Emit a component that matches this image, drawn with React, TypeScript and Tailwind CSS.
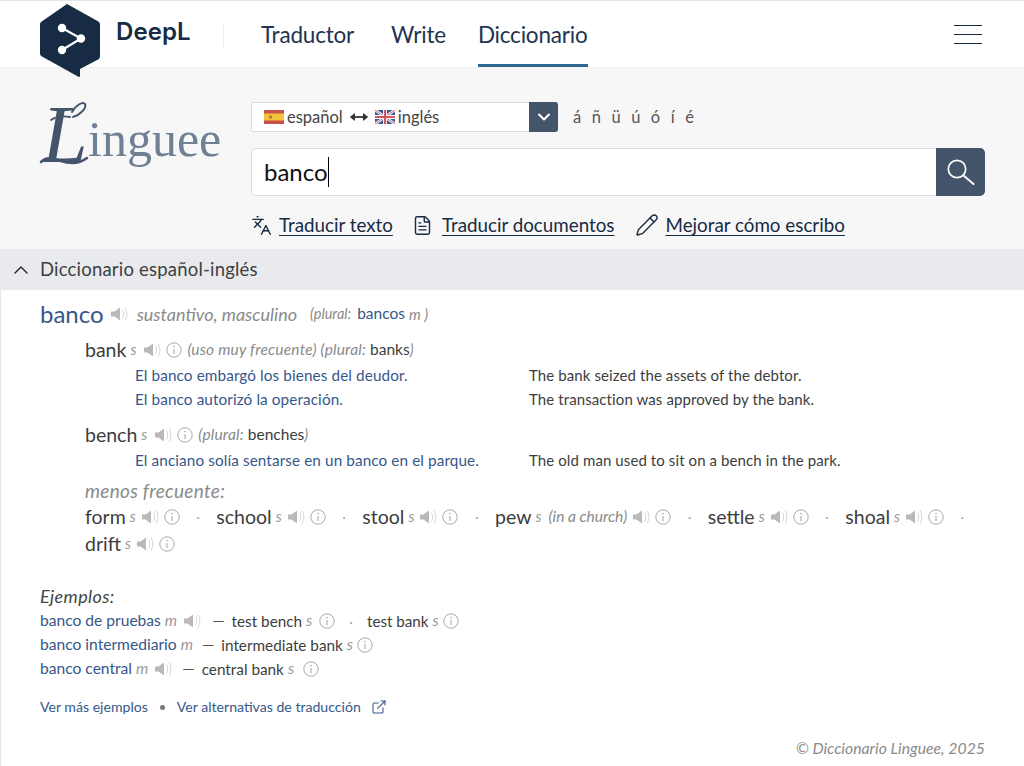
import { ChevronDown, ChevronUp, Languages, FileText, Pencil, ExternalLink } from 'lucide-react';

const sans = "font-['Lato','Noto_Sans',sans-serif]";

function Speaker({ className = '' }: { className?: string }) {
  return (
    <svg viewBox="0 0 20 18" className={`inline-block w-[20px] h-[18px] shrink-0 ${className}`}>
      <path d="M1 6.5h3.5L10 2.5v13l-5.5-4H1z" fill="#b9b9b9" />
      <path d="M12.5 4.5c1.6 2.8 1.6 6.2 0 9M15 2.5c2.4 4 2.4 9 0 13" fill="none" stroke="#d0d0d0" strokeWidth="0.9" />
    </svg>
  );
}

function InfoIcon({ className = '' }: { className?: string }) {
  return (
    <svg viewBox="0 0 16 16" className={`inline-block w-[16px] h-[16px] shrink-0 ${className}`}>
      <circle cx="8" cy="8" r="7.2" fill="none" stroke="#a9a9a9" strokeWidth="1" />
      <path d="M8 7v5" stroke="#a9a9a9" strokeWidth="1.1" />
      <circle cx="8" cy="4.6" r="0.8" fill="#a9a9a9" />
    </svg>
  );
}

function SearchGlyph() {
  return (
    <svg viewBox="0 0 28 26" className="w-[28px] h-[26px]">
      <circle cx="10" cy="10" r="8.7" fill="none" stroke="#fff" strokeWidth="1.7" />
      <path d="M16.5 16.5 26.500 25" stroke="#fff" strokeWidth="2" strokeLinecap="round" />
    </svg>
  );
}

function SpainFlag() {
  return (
    <svg viewBox="0 0 20 14" className="w-[20px] h-[14px] shrink-0">
      <rect width="20" height="14" fill="#c8514a" />
      <rect y="3.5" width="20" height="7" fill="#f3c33c" />
      <rect x="5" y="5.5" width="3" height="3" fill="#b9763f" />
    </svg>
  );
}

function UkFlag() {
  return (
    <svg viewBox="0 0 20 14" className="w-[20px] h-[14px] shrink-0">
      <rect width="20" height="14" fill="#3b5a9a" />
      <path d="M0 0l20 14M20 0L0 14" stroke="#fff" strokeWidth="2.6" />
      <path d="M0 0l20 14M20 0L0 14" stroke="#d0555f" strokeWidth="0.9" />
      <path d="M10 0v14M0 7h20" stroke="#fff" strokeWidth="4" />
      <path d="M10 0v14M0 7h20" stroke="#d0555f" strokeWidth="2.2" />
    </svg>
  );
}

function SwapArrow() {
  return (
    <svg viewBox="0 0 20 10" className="w-[20px] h-[10px] shrink-0 mx-[6px]">
      <path d="M4 5h12" stroke="#333" strokeWidth="1.8" />
      <path d="M6 1 0.8 5 6 9zM14 1l5.2 4L14 9z" fill="#333" />
    </svg>
  );
}

function DeepLMark() {
  return (
    <svg viewBox="0 0 60 74" className="w-[60px] h-[74px] shrink-0">
      <path d="M27 1 57.5 18c1.6.9 2.5 2 2.5 3.6v31.6c0 1.6-.8 2.8-2.4 3.6L40 66v7c0 1-.8 1.2-1.6.8L2.4 53.8C.8 52.9 0 51.8 0 50.2V21.6C0 20 .8 18.9 2.4 18L27 1c1-.6-1-.6 0 0z" fill="#172b45" />
      <path d="M22 25l19 10.5L22 47" fill="none" stroke="#fff" strokeWidth="2.2" />
      <circle cx="22" cy="25" r="4.2" fill="#fff" />
      <circle cx="41" cy="35.5" r="4.2" fill="#fff" />
      <circle cx="22" cy="47" r="4.2" fill="#fff" />
    </svg>
  );
}

function LingueeLogo() {
  return (
    <div className="relative w-[180px] h-[72px] shrink-0 font-['Liberation_Serif',serif]">
      <span className="absolute left-[2px] top-[-6px] text-[82px] leading-[82px] italic text-[#44546a]">L</span>
      <svg viewBox="0 0 180 72" className="absolute inset-0 w-[180px] h-[72px] overflow-visible">
        <path d="M1 62c5-6 13-4 20-1 9 3 18 3 26-3" fill="none" stroke="#44546a" strokeWidth="2.6" strokeLinecap="round" />
        <path d="M11 20c6-4 13-4 19-3" fill="none" stroke="#44546a" strokeWidth="1.8" strokeLinecap="round" />
        <path d="M32 12c4-7 11-11 13-8 2 4-5 11-12 13" fill="none" stroke="#44546a" strokeWidth="2" strokeLinecap="round" />
      </svg>
      <span className="absolute left-[48px] top-[14px] text-[50px] leading-[50px] text-[#6f8095]">inguee</span>
    </div>
  );
}

function ToolLink({ icon, label, gap }: { icon: React.ReactNode; label: string; gap: string }) {
  return (
    <a className={`flex items-center ${gap} text-[#172b45]`}>
      {icon}
      <span className="text-[18.8px] leading-[24px] underline underline-offset-[3px] decoration-1">{label}</span>
    </a>
  );
}

function Example({ es, en }: { es: string; en: string }) {
  return (
    <div className="flex h-[24px] items-center">
      <span className="w-[444px] pl-[50px] shrink-0 text-[15.3px] tracking-[0.1px] text-[#36578a]">{es}</span>
      <span className="text-[15px] tracking-[0.1px] text-[#3d3d3d]">{en}</span>
    </div>
  );
}

const lessFrequent: { word: string; note?: string }[] = [
  { word: 'form' },
  { word: 'school' },
  { word: 'stool' },
  { word: 'pew', note: '(in a church)' },
  { word: 'settle' },
  { word: 'shoal' },
];

function Dot({ className = 'mx-[16.5px]' }: { className?: string }) {
  return <span className={`${className} text-[#aaa] text-[14px]`}>·</span>;
}

export default function App() {
  return (
    <div className={`w-[1024px] h-[766px] overflow-hidden bg-white ${sans}`}>
      <header className="relative z-10 h-[68px] border-t border-[#dfe6e6] bg-white border-b-[#f0f0f0] border-b flex items-start pl-[40px]">
        <div className="mt-[2px]"><DeepLMark /></div>
        <span className="ml-[16px] mt-[16px] text-[24px] leading-[30px] font-semibold text-[#172b45] font-['Inter',sans-serif] tracking-[0.1px] w-[74px] whitespace-nowrap">DeepL</span>
        <span className="ml-[33px] mt-[22px] w-[1px] h-[24px] bg-[#eeeeee]" />
        <nav className="ml-[37px] flex text-[22.5px] text-[#22344f] h-[66px]">
          <a className="pt-[18px] leading-[32px] -tracking-[0.2px]">Traductor</a>
          <a className="ml-[37px] pt-[18px] leading-[32px] -tracking-[0.2px]">Write</a>
          <a className="ml-[32px] pt-[18px] leading-[32px] -tracking-[0.2px] border-b-[3px] border-[#2f6793]">Diccionario</a>
        </nav>
        <button className="ml-auto mr-[42px] mt-[24px] w-[28px] flex flex-col gap-[8px]">
          <span className="block h-[1px] bg-[#172b45]" />
          <span className="block h-[1px] bg-[#172b45]" />
          <span className="block h-[1px] bg-[#172b45]" />
        </button>
      </header>

      <section className="h-[181px] bg-[#f7f7f7] flex pl-[40px] pr-[39px]">
        <div className="mt-[32px]"><LingueeLogo /></div>
        <div className="ml-[31px] flex-1 pt-[34px]">
          <div className="flex items-center">
            <div className="w-[307px] h-[30px] flex bg-white border border-[#dddddd] rounded-[2px]">
              <div className="flex-1 flex items-center pl-[12px] text-[16.5px] text-[#444]">
                <SpainFlag />
                <span className="ml-[3px]">español</span>
                <SwapArrow />
                <UkFlag />
                <span className="ml-[3px]">inglés</span>
              </div>
              <div className="w-[29px] -my-[1px] -mr-[1px] bg-[#44546a] rounded-r-[3px] flex items-center justify-center">
                <ChevronDown size={20} strokeWidth={2.5} className="text-white" />
              </div>
            </div>
            <div className="ml-[15px] flex gap-[10.5px] text-[16.5px] text-[#555]">
              {['á', 'ñ', 'ü', 'ú', 'ó', 'í', 'é'].map(c => <span key={c}>{c}</span>)}
            </div>
          </div>
          <div className="mt-[16px] h-[48px] flex">
            <div className="flex-1 bg-white border border-[#dddddd] border-r-0 rounded-l-[5px] flex items-center pl-[12px] text-[24px] text-[#111]">
              banco<span className="w-[1px] h-[30px] bg-black" />
            </div>
            <div className="w-[49px] bg-[#44546a] rounded-r-[5px] flex items-center justify-center">
              <SearchGlyph />
            </div>
          </div>
          <div className="mt-[17px] flex items-center">
            <ToolLink gap="gap-[7px]" label="Traducir texto" icon={<Languages size={21} strokeWidth={1.6} />} />
            <div className="ml-[19px]">
              <ToolLink gap="gap-[9px]" label="Traducir documentos" icon={<FileText size={21} strokeWidth={1.6} />} />
            </div>
            <div className="ml-[21px]">
              <ToolLink gap="gap-[6px]" label="Mejorar cómo escribo" icon={<Pencil size={24} strokeWidth={1.4} />} />
            </div>
          </div>
        </div>
      </section>

      <main className="border-l border-[#e5e5e5] h-[517px]">
        <div className="h-[41px] bg-[#e8eaee] -ml-[1px] flex items-center pl-[9px] text-[18.5px] tracking-[0.2px] text-[#3f3f3f]">
          <ChevronUp size={24} strokeWidth={1.4} className="text-[#222]" />
          <span className="ml-[7px]">Diccionario español-inglés</span>
        </div>

        <div className="pl-[39px] pr-[39px]">
          <div className="mt-[9px] h-[30px] flex items-center">
            <span className="text-[24px] text-[#36578a]">banco</span>
            <Speaker className="ml-[6px]" />
            <span className="ml-[7px] text-[18px] italic text-[#8a8a8a]">sustantivo, masculino</span>
            <span className="ml-[13px] text-[14.5px] italic text-[#8a8a8a]">(plural:</span>
            <span className="ml-[6px] text-[15.5px] text-[#36578a]">bancos</span>
            <span className="ml-[4px] text-[15px] italic text-[#8a8a8a]">m )</span>
          </div>

          <div className="ml-[45px] mt-[7px]">
            <div className="h-[27px] flex items-center">
              <span className="text-[19.5px] text-[#3d3d3d]">bank</span>
              <span className="ml-[4px] text-[15px] italic text-[#999]">s</span>
              <Speaker className="ml-[7px]" />
              <InfoIcon className="ml-[3px]" />
              <span className="ml-[5px] text-[15.5px] tracking-[0.2px] italic text-[#8a8a8a]">(uso muy frecuente) (plural:</span>
              <span className="ml-[4px] text-[15.5px] text-[#3d3d3d]">banks</span>
              <span className="text-[15px] italic text-[#8a8a8a]">)</span>
            </div>
            <Example es="El banco embargó los bienes del deudor." en="The bank seized the assets of the debtor." />
            <Example es="El banco autorizó la operación." en="The transaction was approved by the bank." />
            <div className="mt-[10px] h-[27px] flex items-center">
              <span className="text-[19.5px] text-[#3d3d3d]">bench</span>
              <span className="ml-[4px] text-[15px] italic text-[#999]">s</span>
              <Speaker className="ml-[7px]" />
              <InfoIcon className="ml-[3px]" />
              <span className="ml-[5px] text-[15.5px] tracking-[0.2px] italic text-[#8a8a8a]">(plural:</span>
              <span className="ml-[4px] text-[15.5px] text-[#3d3d3d]">benches</span>
              <span className="text-[15px] italic text-[#8a8a8a]">)</span>
            </div>
            <Example es="El anciano solía sentarse en un banco en el parque." en="The old man used to sit on a bench in the park." />

            <div className="mt-[6px] h-[25px] leading-[25px] text-[19px] tracking-[0.3px] italic text-[#8a8a8a]">menos frecuente:</div>
            <div className="h-[27px] flex items-center whitespace-nowrap">
              {lessFrequent.map(item => (
                <span key={item.word} className="flex items-center">
                  <span className="text-[19.5px] text-[#3d3d3d]">{item.word}</span>
                  <span className="ml-[4px] text-[15px] italic text-[#999]">s</span>
                  {item.note && <span className="ml-[7px] text-[15.5px] italic text-[#8a8a8a]">{item.note}</span>}
                  <Speaker className="ml-[5px]" />
                  <InfoIcon className="ml-[3px]" />
                  <Dot />
                </span>
              ))}
            </div>
            <div className="h-[27px] flex items-center">
              <span className="text-[19.5px] text-[#3d3d3d]">drift</span>
              <span className="ml-[4px] text-[15px] italic text-[#999]">s</span>
              <Speaker className="ml-[5px]" />
              <InfoIcon className="ml-[3px]" />
            </div>
          </div>

          <div className="mt-[27px] h-[24px] leading-[24px] text-[18px] tracking-[0.4px] italic text-[#444]">Ejemplos:</div>
          <div className="mt-[1px] text-[15.6px]">
            <div className="h-[24px] flex items-center">
              <span className="text-[#36578a]">banco de pruebas</span>
              <span className="ml-[4px] italic text-[#999]">m</span>
              <Speaker className="ml-[6px]" />
              <span className="ml-[9px] text-[#555]">—</span>
              <span className="ml-[7px] text-[15.3px] text-[#3d3d3d]">test bench</span>
              <span className="ml-[4px] italic text-[#999]">s</span>
              <InfoIcon className="ml-[7px]" />
              <Dot className="mx-[14px]" />
              <span className="text-[15.2px] text-[#3d3d3d]">test bank</span>
              <span className="ml-[4px] italic text-[#999]">s</span>
              <InfoIcon className="ml-[4px]" />
            </div>
            <div className="h-[24px] flex items-center">
              <span className="text-[#36578a]">banco intermediario</span>
              <span className="ml-[4px] italic text-[#999]">m</span>
              <span className="ml-[9px] text-[#555]">—</span>
              <span className="ml-[7px] text-[15.3px] text-[#3d3d3d]">intermediate bank</span>
              <span className="ml-[4px] italic text-[#999]">s</span>
              <InfoIcon className="ml-[4px]" />
            </div>
            <div className="h-[24px] flex items-center">
              <span className="text-[#36578a]">banco central</span>
              <span className="ml-[4px] italic text-[#999]">m</span>
              <Speaker className="ml-[6px]" />
              <span className="ml-[8px] text-[#555]">—</span>
              <span className="ml-[7px] text-[15.3px] text-[#3d3d3d]">central bank</span>
              <span className="ml-[4px] italic text-[#999]">s</span>
              <InfoIcon className="ml-[9px]" />
            </div>
          </div>

          <div className="mt-[14px] h-[24px] flex items-center text-[14.1px] text-[#36578a]">
            <a>Ver más ejemplos</a>
            <span className="mx-[12px] w-[5px] h-[5px] rounded-full bg-[#777]" />
            <a>Ver alternativas de traducción</a>
            <ExternalLink size={16} strokeWidth={1.6} className="ml-[10px]" />
          </div>

          <div className="mt-[17px] text-right text-[15.8px] italic text-[#8a8a8a]">© Diccionario Linguee, 2025</div>
        </div>
      </main>
    </div>
  );
}
